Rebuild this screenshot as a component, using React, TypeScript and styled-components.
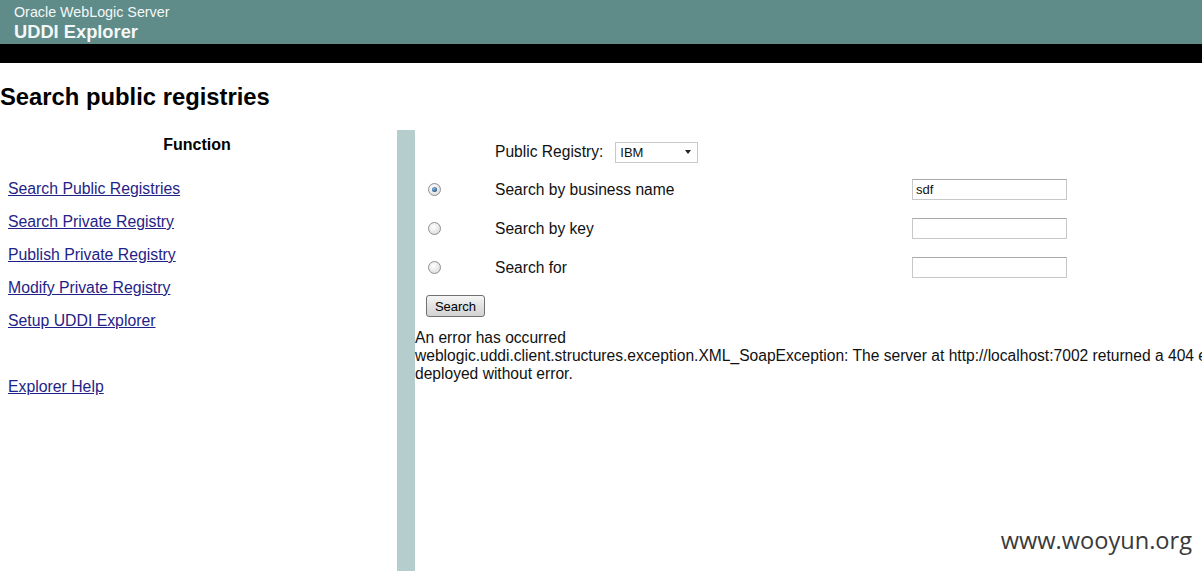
import React from "react";
import styled, { createGlobalStyle } from "styled-components";

const Global = createGlobalStyle`
  html, body { margin: 0; padding: 0; background: #fff; overflow: hidden; }
  body { font-family: "Liberation Sans", Arial, sans-serif; color: #000; }
`;

const Page = styled.div`
  position: relative;
  width: 1202px;
  height: 571px;
  overflow: hidden;
`;

const Header = styled.div`
  background: #5f8b88;
  height: 44px;
  padding-left: 14px;
  display: flex;
  flex-direction: column;
  justify-content: flex-start;
  color: #f4f8f8;
`;

const Product = styled.div`
  font-size: 14.3px;
  line-height: 16px;
  margin-top: 4px;
`;

const AppTitle = styled.div`
  font-size: 18.3px;
  font-weight: bold;
  line-height: 20px;
  margin-top: 2px;
`;

const BlackBar = styled.div`
  background: #000;
  height: 19px;
`;

const Heading = styled.h1`
  margin: 20px 0 19px 0;
  font-size: 23.8px;
  line-height: 28px;
  font-weight: bold;
`;

const Body = styled.div`
  display: flex;
  align-items: stretch;
  height: 441px;
`;

const Sidebar = styled.div`
  width: 397px;
  flex: none;
  display: flex;
  flex-direction: column;
`;

const SideTitle = styled.div`
  text-align: center;
  font-weight: bold;
  font-size: 16px;
  line-height: 18px;
  margin: 6px 0 0 -3px;
`;

const NavList = styled.div`
  display: flex;
  flex-direction: column;
  padding-left: 8px;
  margin-top: 26px;
`;

const NavLink = styled.a<{ $gap?: number }>`
  color: #1f2387;
  text-decoration: underline;
  font-size: 15.8px;
  line-height: 18px;
  height: 33px;
  margin-top: ${(p) => p.$gap ?? 0}px;
  cursor: pointer;
`;

const Divider = styled.div`
  width: 18px;
  flex: none;
  background: #b5cdcd;
`;

const Content = styled.div`
  flex: 1;
  min-width: 0;
  font-size: 15.6px;
`;

const FormGrid = styled.div`
  display: grid;
  grid-template-columns: 80px 417px 160px;
  grid-auto-rows: 39px;
  grid-template-rows: 36px;
  margin-top: 4px;
`;

const RegistryRow = styled.div`
  grid-column: 2 / 4;
  display: flex;
  align-items: center;
  gap: 12px;
`;

const Cell = styled.div`
  display: flex;
  align-items: center;
`;

const RadioCell = styled(Cell)`
  padding-left: 13px;
`;

const Label = styled.span`
  font-size: 15.6px;
  line-height: 18px;
  color: #111;
`;

const Radio = styled.span<{ $checked?: boolean }>`
  width: 11px;
  height: 11px;
  border-radius: 50%;
  border: 1px solid #8f8f8f;
  background: radial-gradient(circle at 40% 35%, #ffffff 0%, #e6e6e6 60%, #cfcfcf 100%);
  display: flex;
  align-items: center;
  justify-content: center;
  &::after {
    content: "";
    display: ${(p) => (p.$checked ? "block" : "none")};
    width: 5px;
    height: 5px;
    border-radius: 50%;
    background: radial-gradient(circle at 40% 35%, #8fb6dc 0%, #2a5b8e 70%, #1c3f66 100%);
  }
`;

const SelectBox = styled.div`
  height: 19px;
  border: 1px solid #c9c9c9;
  background: #fff;
  display: flex;
  align-items: center;
  justify-content: space-between;
  padding: 0 6px 0 4px;
  box-sizing: content-box;
  width: 71px;
  font-size: 13px;
  color: #111;
`;

const Caret = styled.span`
  width: 0;
  height: 0;
  border-left: 3px solid transparent;
  border-right: 3px solid transparent;
  border-top: 4px solid #222;
`;

const TextBox = styled.div`
  width: 150px;
  height: 19px;
  border: 1px solid #c8c8c8;
  border-top-color: #a8a8a8;
  background: #fff;
  font-size: 13px;
  line-height: 19px;
  padding-left: 3px;
  box-sizing: content-box;
  color: #111;
`;

const ButtonRow = styled.div`
  padding: 8px 0 0 11px;
  height: 22px;
`;

const Button = styled.button`
  width: 59px;
  height: 22px;
  border: 1px solid #707070;
  border-radius: 3px;
  background: linear-gradient(#f6f6f6, #e2e2e2 50%, #d3d3d3);
  font-family: "Liberation Sans", Arial, sans-serif;
  font-size: 13px;
  color: #000;
  padding: 0;
`;

const ErrorBlock = styled.div`
  margin-top: 12px;
  font-size: 15.6px;
  line-height: 18px;
  color: #111;
  white-space: nowrap;
`;

const Watermark = styled.div`
  position: absolute;
  right: 10px;
  bottom: 15px;
  font-family: "Open Sans", "DejaVu Sans", sans-serif;
  font-size: 23.6px;
  color: #3a3a3a;
`;

export default function App() {
  const rows = [
    { label: "Search by business name", checked: true, value: "sdf" },
    { label: "Search by key", checked: false, value: "" },
    { label: "Search for", checked: false, value: "" },
  ];
  return (
    <Page>
      <Global />
      <Header>
        <Product>Oracle WebLogic Server</Product>
        <AppTitle>UDDI Explorer</AppTitle>
      </Header>
      <BlackBar />
      <Heading>Search public registries</Heading>
      <Body>
        <Sidebar>
          <SideTitle>Function</SideTitle>
          <NavList>
            <NavLink>Search Public Registries</NavLink>
            <NavLink>Search Private Registry</NavLink>
            <NavLink>Publish Private Registry</NavLink>
            <NavLink>Modify Private Registry</NavLink>
            <NavLink>Setup UDDI Explorer</NavLink>
            <NavLink $gap={33}>Explorer Help</NavLink>
          </NavList>
        </Sidebar>
        <Divider />
        <Content>
          <FormGrid>
            <Cell />
            <RegistryRow>
              <Label>Public Registry:</Label>
              <SelectBox>
                <span>IBM</span>
                <Caret />
              </SelectBox>
            </RegistryRow>
            {rows.map((r) => (
              <React.Fragment key={r.label}>
                <RadioCell>
                  <Radio $checked={r.checked} />
                </RadioCell>
                <Cell>
                  <Label>{r.label}</Label>
                </Cell>
                <Cell>
                  <TextBox>{r.value}</TextBox>
                </Cell>
              </React.Fragment>
            ))}
          </FormGrid>
          <ButtonRow>
            <Button>Search</Button>
          </ButtonRow>
          <ErrorBlock>
            An error has occurred
            <br />
            weblogic.uddi.client.structures.exception.XML_SoapException: The server at http://localhost:7002 returned a 404 error code (Page Not Found). Check that the UDDI Server is
            <br />
            deployed without error.
          </ErrorBlock>
        </Content>
      </Body>
      <Watermark>www.wooyun.org</Watermark>
    </Page>
  );
}
